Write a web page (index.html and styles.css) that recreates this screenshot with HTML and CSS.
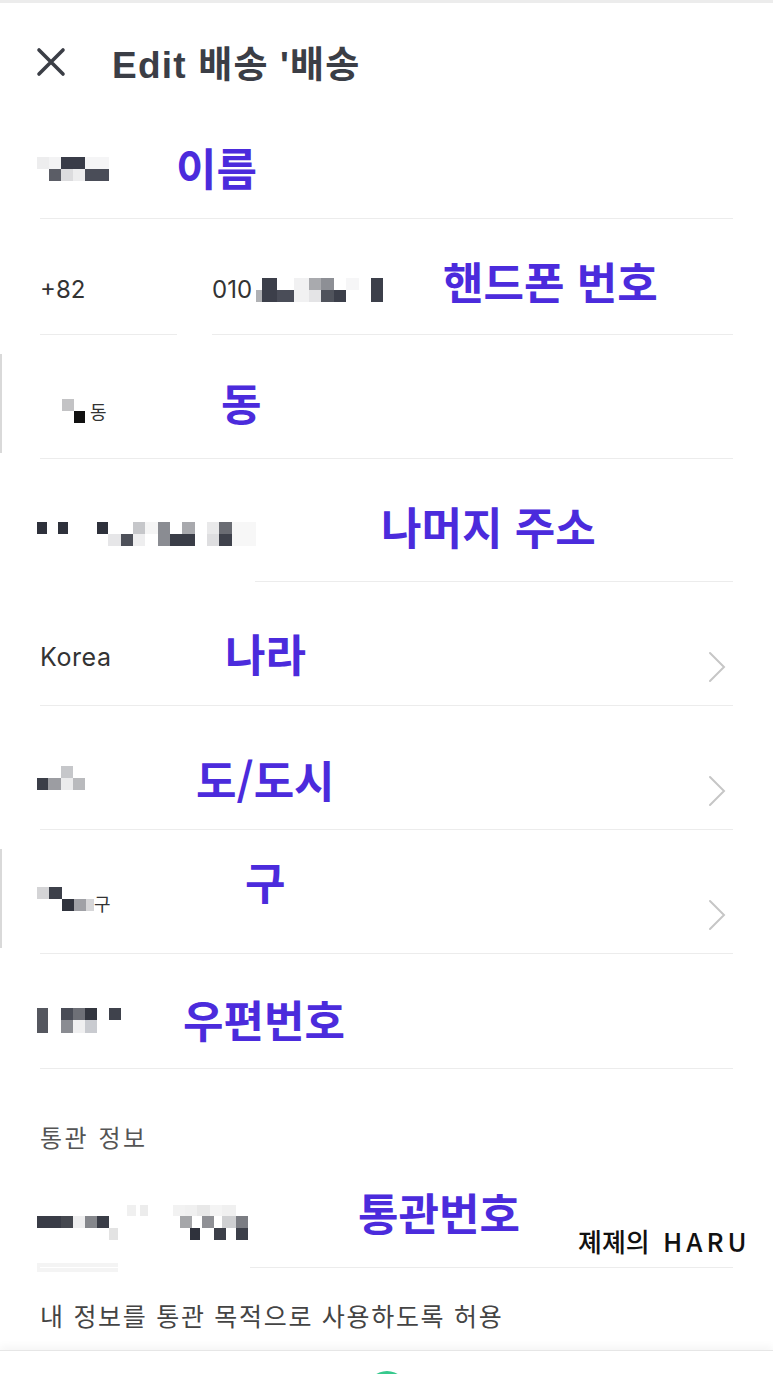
FILE: index.html
```html
<!DOCTYPE html>
<html lang="ko">
<head>
    <meta charset="UTF-8">
    <meta name="viewport" content="width=device-width, initial-scale=1.0">
    <title>Edit 배송</title>
    <link rel="stylesheet" href="styles.css">
</head>
<body>
    <header class="topbar">
        <svg class="close-icon" viewBox="0 0 30 30" width="30" height="30">
            <path d="M3 3 L27 27 M27 3 L3 27" stroke="#3b3e46" stroke-width="3.6" stroke-linecap="round" fill="none"/>
        </svg>
        <h1 class="title">Edit 배송 '배송</h1>
    </header>

    <!-- name -->
    <div class="field field--name">
        <div class="value value--name">
            <svg class="mosaic" width="72" height="24" viewBox="0 0 72 24">
                <rect x="0" y="0" width="12" height="12" fill="#ededee"/>
                <rect x="12" y="0" width="12" height="12" fill="#f3f3f4"/>
                <rect x="24" y="0" width="24" height="12" fill="#393c48"/>
                <rect x="48" y="0" width="24" height="12" fill="#f5f5f6"/>
                <rect x="12" y="12" width="12" height="12" fill="#5b5d66"/>
                <rect x="24" y="12" width="12" height="12" fill="#dcdcde"/>
                <rect x="36" y="12" width="12" height="12" fill="#ededee"/>
                <rect x="48" y="12" width="24" height="12" fill="#4a4d58"/>
            </svg>
        </div>
        <span class="note note--name">이름</span>
    </div>

    <!-- phone -->
    <div class="phone">
        <div class="field field--code">
            <div class="value value--phone">+82</div>
        </div>
        <div class="field field--number">
            <div class="value value--phone">010<svg class="mosaic mosaic--tight" width="128" height="24" viewBox="0 0 128 24">
                <rect x="1" y="12" width="6" height="12" fill="#b0b1b4"/>
                <rect x="7" y="0" width="15" height="24" fill="#3c3f4a"/>
                <rect x="22" y="12" width="17" height="12" fill="#4a4d58"/>
                <rect x="39" y="0" width="15" height="24" fill="#f1f1f2"/>
                <rect x="54" y="0" width="12" height="12" fill="#a9aaae"/>
                <rect x="54" y="12" width="12" height="12" fill="#e4e4e6"/>
                <rect x="66" y="0" width="13" height="12" fill="#8d8f95"/>
                <rect x="66" y="12" width="13" height="12" fill="#50535c"/>
                <rect x="79" y="12" width="12" height="12" fill="#3c3f4a"/>
                <rect x="91" y="0" width="13" height="12" fill="#f6f6f7"/>
                <rect x="116" y="0" width="12" height="24" fill="#3c3f4a"/>
            </svg></div>
            <span class="note note--phone">핸드폰 번호</span>
        </div>
    </div>

    <!-- dong -->
    <div class="field field--dong field--edge">
        <div class="value value--dong">
            <svg class="mosaic mosaic--dong" width="24" height="24" viewBox="0 0 24 24">
                <rect x="0" y="0" width="12" height="12" fill="#c3c3c5"/>
                <rect x="12" y="12" width="11" height="12" fill="#111"/>
            </svg>
            <span class="suffix">동</span>
        </div>
        <span class="note note--dong">동</span>
    </div>

    <!-- address -->
    <div class="field field--address field--cut">
        <div class="value value--address">
            <svg class="mosaic" width="219" height="24" viewBox="0 0 219 24">
                <rect x="0" y="0" width="10" height="12" fill="#2e313b"/>
                <rect x="21" y="0" width="10" height="12" fill="#2e313b"/>
                <rect x="60" y="0" width="11" height="12" fill="#2e313b"/>
                <rect x="71" y="12" width="13" height="12" fill="#e6e6e8"/>
                <rect x="84" y="12" width="12" height="12" fill="#4d5059"/>
                <rect x="96" y="0" width="12" height="12" fill="#c6c7ca"/>
                <rect x="96" y="12" width="12" height="12" fill="#eeeeef"/>
                <rect x="108" y="0" width="13" height="12" fill="#f5f5f5"/>
                <rect x="121" y="0" width="12" height="24" fill="#8a8c92"/>
                <rect x="133" y="12" width="12" height="12" fill="#3a3d47"/>
                <rect x="145" y="0" width="13" height="12" fill="#a8a9ad"/>
                <rect x="145" y="12" width="13" height="12" fill="#3a3d47"/>
                <rect x="170" y="0" width="12" height="12" fill="#e9e9ea"/>
                <rect x="170" y="12" width="12" height="12" fill="#dedee0"/>
                <rect x="182" y="0" width="13" height="12" fill="#6a6c73"/>
                <rect x="182" y="12" width="13" height="12" fill="#3f424c"/>
                <rect x="195" y="0" width="24" height="24" fill="#f7f7f7"/>
            </svg>
        </div>
        <span class="note note--address">나머지 주소</span>
    </div>

    <!-- country -->
    <div class="field field--country">
        <div class="value value--country">Korea</div>
        <span class="note note--country">나라</span>
        <svg class="chevron" width="18" height="32" viewBox="0 0 18 32">
            <path d="M2 2 L16 16 L2 30" stroke="#c6c6c6" stroke-width="2" fill="none" stroke-linecap="round"/>
        </svg>
    </div>

    <!-- province / city -->
    <div class="field field--city">
        <div class="value value--city">
            <svg class="mosaic" width="48" height="24" viewBox="0 0 48 24">
                <rect x="24" y="0" width="12" height="12" fill="#c6c7ca"/>
                <rect x="0" y="12" width="11" height="12" fill="#3b3e48"/>
                <rect x="11" y="12" width="13" height="12" fill="#9c9da2"/>
                <rect x="24" y="12" width="12" height="12" fill="#ebebec"/>
                <rect x="36" y="12" width="12" height="12" fill="#b9babd"/>
            </svg>
        </div>
        <span class="note note--city">도/도시</span>
        <svg class="chevron" width="18" height="32" viewBox="0 0 18 32">
            <path d="M2 2 L16 16 L2 30" stroke="#c6c6c6" stroke-width="2" fill="none" stroke-linecap="round"/>
        </svg>
    </div>

    <!-- district -->
    <div class="field field--district field--edge">
        <div class="value value--district">
            <svg class="mosaic" width="57" height="24" viewBox="0 0 57 24">
                <rect x="0" y="0" width="12" height="12" fill="#d4d4d6"/>
                <rect x="12" y="0" width="13" height="12" fill="#3d404a"/>
                <rect x="25" y="12" width="12" height="12" fill="#30333d"/>
                <rect x="37" y="12" width="12" height="12" fill="#a0a1a6"/>
                <rect x="49" y="12" width="8" height="12" fill="#d6d6d8"/>
            </svg>
            <span class="suffix suffix--low">구</span>
        </div>
        <span class="note note--district">구</span>
        <svg class="chevron" width="18" height="32" viewBox="0 0 18 32">
            <path d="M2 2 L16 16 L2 30" stroke="#c6c6c6" stroke-width="2" fill="none" stroke-linecap="round"/>
        </svg>
    </div>

    <!-- postcode -->
    <div class="field field--postcode">
        <div class="value value--postcode">
            <svg class="mosaic" width="84" height="25" viewBox="0 0 84 25">
                <rect x="0" y="0" width="11" height="25" fill="#55575f"/>
                <rect x="24" y="0" width="12" height="12" fill="#4a4d57"/>
                <rect x="24" y="12" width="12" height="13" fill="#8a8c92"/>
                <rect x="36" y="0" width="12" height="12" fill="#6e7077"/>
                <rect x="36" y="12" width="12" height="13" fill="#f0f0f1"/>
                <rect x="48" y="0" width="12" height="12" fill="#33363f"/>
                <rect x="48" y="12" width="12" height="13" fill="#c9cbd0"/>
                <rect x="72" y="0" width="12" height="12" fill="#3f424c"/>
            </svg>
        </div>
        <span class="note note--postcode">우편번호</span>
    </div>

    <div class="section-label">통관 정보</div>

    <!-- customs -->
    <div class="field field--customs">
        <div class="value value--customs">
            <svg class="mosaic" width="213" height="35" viewBox="0 0 213 35">
                <rect x="90" y="0" width="9" height="11" fill="#f0f0f0"/>
                <rect x="103" y="0" width="8" height="11" fill="#ececec"/>
                <rect x="136" y="0" width="12" height="11" fill="#f2f2f2"/>
                <rect x="148" y="0" width="12" height="11" fill="#f0f0f0"/>
                <rect x="160" y="0" width="13" height="11" fill="#e8e8e8"/>
                <rect x="173" y="0" width="12" height="11" fill="#f4f4f4"/>
                <rect x="185" y="0" width="14" height="11" fill="#f0f0f0"/>
                <rect x="0" y="11" width="24" height="12" fill="#393c46"/>
                <rect x="24" y="11" width="12" height="12" fill="#45484f"/>
                <rect x="36" y="11" width="12" height="12" fill="#eeeeef"/>
                <rect x="48" y="11" width="12" height="12" fill="#85878c"/>
                <rect x="60" y="11" width="12" height="12" fill="#3a3d47"/>
                <rect x="143" y="11" width="12" height="12" fill="#a5a6a9"/>
                <rect x="165" y="11" width="12" height="12" fill="#8f9095"/>
                <rect x="185" y="11" width="14" height="12" fill="#cfd0d2"/>
                <rect x="199" y="11" width="12" height="12" fill="#7b7d83"/>
                <rect x="72" y="23" width="9" height="12" fill="#e3e3e3"/>
                <rect x="153" y="23" width="10" height="12" fill="#2f323c"/>
                <rect x="177" y="23" width="12" height="12" fill="#3c3f49"/>
                <rect x="199" y="23" width="12" height="12" fill="#3c3f49"/>
            </svg>
        </div>
        <span class="note note--customs">통관번호</span>
        <span class="watermark">졔졔의 <span class="watermark-latin">HARU</span></span>
    </div>

    <p class="consent">내 정보를 통관 목적으로 사용하도록 허용</p>

    <div class="bottom-bar">
        <div class="fab"></div>
    </div>
</body>
</html>
```

FILE: styles.css
```css
body {
    margin: 0;
    font-family: Inter, "Noto Sans CJK KR", sans-serif;
    color: #333;
    background: #fff;
    overflow: hidden;
}

/* header */
.topbar {
    display: flex;
    align-items: center;
    gap: 46px;
    height: 118px;
    padding: 0 36px;
    border-top: 3px solid #ececec;
}
.close-icon {
    flex: none;
}
.title {
    margin: 0;
    font-family: "Liberation Sans", "Noto Sans CJK KR", sans-serif;
    font-size: 37px;
    font-weight: 700;
    letter-spacing: 1.2px;
    color: #3b3e46;
}

/* form rows */
.field {
    position: relative;
    display: flex;
    align-items: flex-end;
    margin: 0 40px;
    height: 124px;
    box-sizing: border-box;
    border-bottom: 1px solid #ececec;
}
.value {
    display: flex;
    align-items: center;
    height: 26px;
    line-height: 26px;
    font-size: 24px;
    color: #333;
    margin-bottom: 35px;
}
.mosaic {
    display: block;
    flex: none;
    margin-left: -3px;
}
.mosaic--tight {
    margin-left: 3px;
}
.mosaic--dong {
    margin-left: 22px;
}
.suffix {
    font-family: "Noto Sans CJK KR", sans-serif;
    font-size: 18px;
    color: #333;
    margin-left: 4px;
}
.suffix--low {
    margin-left: 0;
    position: relative;
    top: 4px;
}
.chevron {
    flex: none;
    margin-left: auto;
    margin-right: 7px;
    margin-bottom: 22px;
}

.field--name { height: 98px; }
.value--name { margin-bottom: 36px; }

.phone {
    display: flex;
    gap: 35px;
    margin: 0 40px;
}
.phone .field {
    margin: 0;
    height: 116px;
}
.field--code { width: 137px; flex: none; }
.field--number { flex: 1; }
.value--phone { margin-bottom: 31px; }

.value--dong { margin-bottom: 34px; }
.field--address { height: 123px; }
.value--address { margin-bottom: 34px; }
.value--country { font-size: 25px; letter-spacing: 0.6px; }
.value--city { margin-bottom: 38px; }
.value--district { margin-bottom: 41px; }
.field--postcode { height: 115px; }
.value--postcode { margin-bottom: 35px; }
.field--customs { height: 118px; }
.value--customs { margin-bottom: 32px; }

/* thin grey edge on the left of the screen */
.field--edge::before {
    content: "";
    position: absolute;
    left: -40px;
    top: 19px;
    bottom: 5px;
    width: 2px;
    background: #d9d9d9;
}
/* separator hidden under the blur */
.field--cut::after {
    content: "";
    position: absolute;
    left: 0;
    bottom: -1px;
    width: 215px;
    height: 1px;
    background: #fff;
}
.field--customs::after {
    content: "";
    position: absolute;
    left: 0;
    bottom: -1px;
    width: 210px;
    height: 1px;
    background: #fff;
}
.field--customs::before {
    content: "";
    position: absolute;
    left: -3px;
    bottom: -5px;
    width: 81px;
    height: 9px;
    background: #f4f4f4;
}

/* blue annotations drawn over the screenshot */
.note {
    position: absolute;
    font-family: "Noto Sans CJK KR", sans-serif;
    font-weight: 700;
    font-size: 44px;
    line-height: 44px;
    color: #4b2bdc;
    white-space: nowrap;
}
.note--name { left: 136px; top: 24px; }
.note--phone { left: 231px; top: 40px; }
.note--dong { left: 181px; top: 45px; }
.note--address { left: 341px; top: 45px; }
.note--country { left: 185px; top: 49px; }
.note--city { left: 156px; top: 51px; }
.note--district { left: 205px; top: 29px; }
.note--postcode { left: 143px; top: 43px; }
.note--customs { left: 318px; top: 40px; }

.watermark {
    position: absolute;
    left: 538px;
    top: 76px;
    font-family: "Noto Sans CJK KR", sans-serif;
    font-size: 26px;
    font-weight: 500;
    line-height: 30px;
    color: #111;
    white-space: nowrap;
}
.watermark-latin {
    margin-left: 6px;
    letter-spacing: 4px;
}

/* customs section */
.section-label {
    margin: 0 40px;
    padding-top: 55px;
    line-height: 26px;
    font-family: "Noto Sans CJK KR", sans-serif;
    font-size: 24px;
    letter-spacing: 2.5px;
    color: #555;
}
.consent {
    margin: 0 40px;
    padding-top: 34px;
    line-height: 26px;
    font-family: "Noto Sans CJK KR", sans-serif;
    font-size: 25px;
    letter-spacing: 1.7px;
    color: #444;
}

.bottom-bar {
    margin-top: 22px;
    height: 80px;
    border-top: 1px solid #e6e6e6;
    box-shadow: 0 -4px 8px rgba(0, 0, 0, 0.04);
    display: flex;
    justify-content: center;
}
.fab {
    width: 40px;
    height: 40px;
    margin-top: 20px;
    border-radius: 50%;
    background: #36c98d;
}
```
